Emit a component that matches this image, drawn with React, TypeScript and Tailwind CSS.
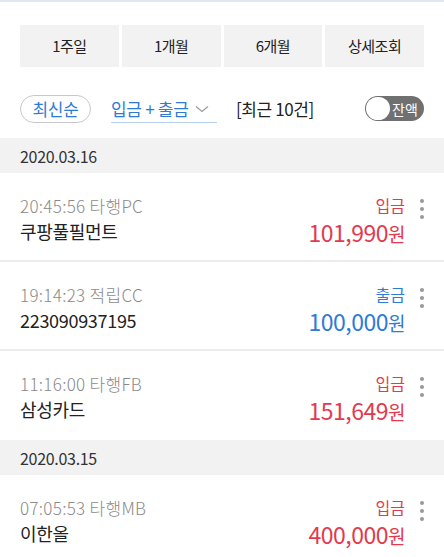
import React from "react";

const font = { fontFamily: '"Noto Sans CJK KR", "Noto Sans", sans-serif' };

type Tx = { time: string; name: string; kind: "입금" | "출금"; amount: string };

function Kebab() {
  return (
    <div className="flex flex-col gap-[4px] items-center w-[4px] mt-[2px]">
      <span className="block w-[4px] h-[4px] rounded-full bg-[#999]" />
      <span className="block w-[4px] h-[4px] rounded-full bg-[#999]" />
      <span className="block w-[4px] h-[4px] rounded-full bg-[#999]" />
    </div>
  );
}

function Row({ tx, last }: { tx: Tx; last?: boolean }) {
  const color = tx.kind === "입금" ? "text-[#e23a4e]" : "text-[#2f7bd4]";
  return (
    <div className={`flex items-start pl-5 pr-[20px] h-[89px] pt-[20px] ${last ? "" : "border-b-2 border-[#ececec]"}`}>
      <div className="flex-1 flex flex-col">
        <div className="text-[17px] leading-[25px] text-[#8a8a8a] font-light tracking-[0.3px]">{tx.time}</div>
        <div className="text-[18px] leading-[27px] text-[#222] tracking-[-0.3px]">{tx.name}</div>
      </div>
      <div className="flex flex-col items-end">
        <div className={`text-[16px] leading-[25px] ${color}`}>{tx.kind}</div>
        <div className={`text-[23px] leading-[28px] ${color} tracking-[-0.5px]`}>
          {tx.amount}
          <span className="text-[19px]">원</span>
        </div>
      </div>
      <div className="ml-[15px] pt-[4px]">
        <Kebab />
      </div>
    </div>
  );
}

function DateHeader({ date }: { date: string }) {
  return (
    <div className="h-[35px] bg-[#f2f2f2] flex items-center px-5 text-[16px] text-[#333] tracking-[-0.3px]">
      {date}
    </div>
  );
}

export default function App() {
  const day1: Tx[] = [
    { time: "20:45:56 타행PC", name: "쿠팡풀필먼트", kind: "입금", amount: "101,990" },
    { time: "19:14:23 적립CC", name: "223090937195", kind: "출금", amount: "100,000" },
    { time: "11:16:00 타행FB", name: "삼성카드", kind: "입금", amount: "151,649" },
  ];
  const day2: Tx[] = [
    { time: "07:05:53 타행MB", name: "이한올", kind: "입금", amount: "400,000" },
  ];
  return (
    <div className="w-[444px] h-[557px] bg-white overflow-hidden" style={font}>
      <div className="h-[2px] bg-[#e1e6f2]" />
      <div className="px-5 pt-[23px] grid grid-cols-4 gap-[3px]">
        {["1주일", "1개월", "6개월", "상세조회"].map((t) => (
          <div
            key={t}
            className="h-[42px] bg-[#f2f2f2] flex items-center justify-center text-[15px] text-[#222] tracking-[-0.5px]"
          >
            {t}
          </div>
        ))}
      </div>
      <div className="flex items-center px-5 pt-[27px] pb-[15px]">
        <div className="h-[28px] w-[71px] rounded-full border border-[#c8c8c8] flex items-center justify-center text-[17px] text-[#2f7bd4] tracking-[-0.3px]">
          최신순
        </div>
        <div className="ml-[20px] w-[106px] h-[29px] border-b border-[#b8d0ef] flex items-center text-[17px] text-[#2f7bd4] tracking-[-0.3px]">
          <span className="pt-[2px]">입금 + 출금</span>
          <svg className="ml-[6px] mt-[2px]" width="14" height="8" viewBox="0 0 14 8" fill="none">
            <path d="M1 1.5L7 6.5L13 1.5" stroke="#9a9a9a" strokeWidth="1.2" />
          </svg>
        </div>
        <div className="ml-[19px] text-[17px] text-[#222] tracking-[-0.4px]">[최근 10건]</div>
        <div className="ml-auto w-[59px] h-[25px] rounded-full bg-[#707070] flex items-center p-[1px]">
          <span className="block w-[24px] h-[23px] rounded-full bg-white" />
          <span className="ml-[2px] text-[14px] text-white leading-none">잔액</span>
        </div>
      </div>
      <DateHeader date="2020.03.16" />
      {day1.map((tx, i) => (
        <Row key={tx.time} tx={tx} last={i === day1.length - 1} />
      ))}
      <DateHeader date="2020.03.15" />
      {day2.map((tx) => (
        <Row key={tx.time} tx={tx} last />
      ))}
    </div>
  );
}
